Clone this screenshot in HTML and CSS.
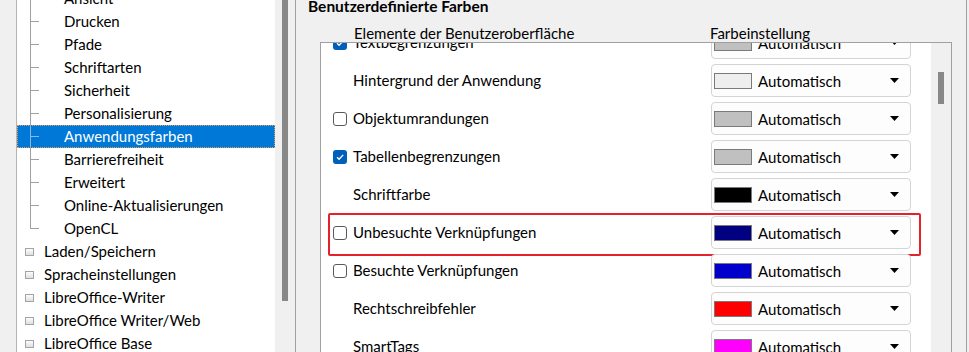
FILE: index.html
```html
<!DOCTYPE html>
<html lang="de">
<head>
<meta charset="utf-8">
<title>Anwendungsfarben</title>
<link rel="stylesheet" href="styles.css">
</head>
<body>
<div class="window">
  <div class="left">
    <div class="tree">
      <div class="tree-view">
        <ul class="tree-list">
          <li class="node child"><span class="branch"></span><span class="label">Ansicht</span></li>
          <li class="node child"><span class="branch"></span><span class="label">Drucken</span></li>
          <li class="node child"><span class="branch"></span><span class="label">Pfade</span></li>
          <li class="node child"><span class="branch"></span><span class="label">Schriftarten</span></li>
          <li class="node child"><span class="branch"></span><span class="label">Sicherheit</span></li>
          <li class="node child"><span class="branch"></span><span class="label">Personalisierung</span></li>
          <li class="node child selected"><span class="branch"></span><span class="label">Anwendungsfarben</span></li>
          <li class="node child"><span class="branch"></span><span class="label">Barrierefreiheit</span></li>
          <li class="node child"><span class="branch"></span><span class="label">Erweitert</span></li>
          <li class="node child"><span class="branch"></span><span class="label">Online-Aktualisierungen</span></li>
          <li class="node child last"><span class="branch"></span><span class="label">OpenCL</span></li>
          <li class="node top"><span class="expander"></span><span class="label">Laden/Speichern</span></li>
          <li class="node top"><span class="expander"></span><span class="label">Spracheinstellungen</span></li>
          <li class="node top"><span class="expander"></span><span class="label">LibreOffice-Writer</span></li>
          <li class="node top"><span class="expander"></span><span class="label">LibreOffice Writer/Web</span></li>
          <li class="node top"><span class="expander"></span><span class="label">LibreOffice Base</span></li>
        </ul>
      </div>
      <div class="vscroll tree-scroll"><div class="thumb"></div></div>
    </div>
  </div>
  <div class="divider"></div>
  <div class="right">
    <div class="heading">Benutzerdefinierte Farben</div>
    <div class="group">
      <div class="colheads">
        <span class="col-el">Elemente der Benutzeroberfläche</span>
        <span class="col-color">Farbeinstellung</span>
      </div>
      <div class="listbox">
        <div class="rows">
          <div class="rows-inner">
            <div class="row">
              <div class="item"><span class="check on"><svg viewBox="0 0 14 14"><path d="M4 7.2 6.1 9.3 10.2 4.9"/></svg></span><span>Textbegrenzungen</span></div>
              <div class="dropdown"><span class="swatch sw-silver"></span><span class="value">Automatisch</span><svg class="arrow" viewBox="0 0 9 5"><polygon points="0,0 9,0 4.5,5"/></svg></div>
            </div>
            <div class="row">
              <div class="item"><span class="check none"></span><span>Hintergrund der Anwendung</span></div>
              <div class="dropdown"><span class="swatch sw-light"></span><span class="value">Automatisch</span><svg class="arrow" viewBox="0 0 9 5"><polygon points="0,0 9,0 4.5,5"/></svg></div>
            </div>
            <div class="row">
              <div class="item"><span class="check off"></span><span>Objektumrandungen</span></div>
              <div class="dropdown"><span class="swatch sw-silver"></span><span class="value">Automatisch</span><svg class="arrow" viewBox="0 0 9 5"><polygon points="0,0 9,0 4.5,5"/></svg></div>
            </div>
            <div class="row">
              <div class="item"><span class="check on"><svg viewBox="0 0 14 14"><path d="M4 7.2 6.1 9.3 10.2 4.9"/></svg></span><span>Tabellenbegrenzungen</span></div>
              <div class="dropdown"><span class="swatch sw-silver"></span><span class="value">Automatisch</span><svg class="arrow" viewBox="0 0 9 5"><polygon points="0,0 9,0 4.5,5"/></svg></div>
            </div>
            <div class="row">
              <div class="item"><span class="check none"></span><span>Schriftfarbe</span></div>
              <div class="dropdown"><span class="swatch sw-black"></span><span class="value">Automatisch</span><svg class="arrow" viewBox="0 0 9 5"><polygon points="0,0 9,0 4.5,5"/></svg></div>
            </div>
            <div class="row">
              <div class="item"><span class="check off"></span><span>Unbesuchte Verknüpfungen</span></div>
              <div class="dropdown"><span class="swatch sw-navy"></span><span class="value">Automatisch</span><svg class="arrow" viewBox="0 0 9 5"><polygon points="0,0 9,0 4.5,5"/></svg></div>
              <div class="highlight"></div>
            </div>
            <div class="row">
              <div class="item"><span class="check off"></span><span>Besuchte Verknüpfungen</span></div>
              <div class="dropdown"><span class="swatch sw-blue"></span><span class="value">Automatisch</span><svg class="arrow" viewBox="0 0 9 5"><polygon points="0,0 9,0 4.5,5"/></svg></div>
            </div>
            <div class="row">
              <div class="item"><span class="check none"></span><span>Rechtschreibfehler</span></div>
              <div class="dropdown"><span class="swatch sw-red"></span><span class="value">Automatisch</span><svg class="arrow" viewBox="0 0 9 5"><polygon points="0,0 9,0 4.5,5"/></svg></div>
            </div>
            <div class="row">
              <div class="item"><span class="check none"></span><span>SmartTags</span></div>
              <div class="dropdown"><span class="swatch sw-magenta"></span><span class="value">Automatisch</span><svg class="arrow" viewBox="0 0 9 5"><polygon points="0,0 9,0 4.5,5"/></svg></div>
            </div>
          </div>
        </div>
        <div class="vscroll list-scroll"><div class="thumb"></div></div>
      </div>
    </div>
  </div>
</div>
</body>
</html>
```
FILE: styles.css
```css
* { box-sizing: border-box; }
html, body { margin: 0; padding: 0; }
body {
  width: 969px;
  height: 352px;
  overflow: hidden;
  background: #f0f0f0;
  font-family: Lato, "Noto Sans", sans-serif;
  font-size: 15px;
  color: #000;
}
.window { display: flex; height: 352px; overflow: hidden; }

/* ---------- left tree ---------- */
.left { flex: none; width: 295px; padding-left: 16px; }
.tree { display: flex; height: 100%; }
.tree-view {
  width: 259px;
  background: #fff;
  border-left: 1px solid #b4b4b4;
  overflow: hidden;
}
.tree-list { list-style: none; margin: -13px 0 0; padding: 0; }
.node {
  display: flex;
  align-items: center;
  height: 23px;
  line-height: 23px;
  white-space: nowrap;
}
.branch {
  flex: none;
  align-self: stretch;
  width: 9px;
  margin-left: 13px;
  margin-right: 25px;
  background:
    linear-gradient(#a0a0a0, #a0a0a0) 0 0 / 1px 100% no-repeat,
    linear-gradient(#a0a0a0, #a0a0a0) 0 11px / 9px 1px no-repeat;
}
.last .branch {
  background:
    linear-gradient(#a0a0a0, #a0a0a0) 0 0 / 1px 12px no-repeat,
    linear-gradient(#a0a0a0, #a0a0a0) 0 11px / 9px 1px no-repeat;
}
.selected {
  background: #0078d7;
  color: #fff;
  outline: 1px dotted #e8a050;
  outline-offset: -1px;
}
.selected .branch {
  background:
    linear-gradient(#8fb8e0, #8fb8e0) 0 0 / 1px 100% no-repeat,
    linear-gradient(#8fb8e0, #8fb8e0) 0 11px / 9px 1px no-repeat;
}
.expander {
  flex: none;
  width: 9px;
  height: 8px;
  margin-left: 8px;
  margin-right: 10px;
  border: 1px solid #a4a4a4;
  background: linear-gradient(#fdfdfd, #dedede);
}
.vscroll { flex: none; width: 20px; background: #f0f0f0; padding-left: 7px; }
.thumb { width: 6px; background: #888; }
.tree-scroll .thumb { height: 301px; }

.divider { flex: none; width: 1px; background: #a0a0a0; }

/* ---------- right pane ---------- */
.right {
  flex: 1;
  padding: 0 14px 0 12px;
  border-right: 1px solid #a0a0a0;
  margin-right: 2px;
}
.heading {
  font-weight: 700;
  font-size: 15.5px;
  line-height: 16px;
  margin-top: -2px;
}
.group { padding-left: 12px; }
.colheads {
  display: flex;
  margin-top: 10px;
  line-height: 18px;
  padding-left: 34px;
  white-space: nowrap;
}
.col-el { flex: none; width: 356px; }

.listbox {
  display: flex;
  height: 400px;
  background: #fff;
  border: 1px solid #a0a0a0;
}
.rows { flex: 1; overflow: hidden; }
.rows-inner { display: flex; flex-direction: column; gap: 5px; margin-top: -17px; }
.row { position: relative; display: flex; align-items: center; height: 33px; }
.item {
  flex: 1;
  display: flex;
  align-items: center;
  gap: 6px;
  padding-left: 12px;
  line-height: 33px;
  white-space: nowrap;
}
.check { flex: none; width: 14px; height: 14px; border-radius: 3px; }
.check.none { visibility: hidden; }
.check.off { border: 1px solid #5a5a5a; background: #fff; }
.check.on { background: #005fb8; }
.check svg { display: block; width: 14px; height: 14px; }
.check path { fill: none; stroke: #fff; stroke-width: 1.3; }

.dropdown {
  flex: none;
  display: flex;
  align-items: center;
  width: 200px;
  height: 33px;
  margin-right: 20px;
  padding: 0 11px 0 2px;
  background: #fdfdfd;
  border: 1px solid #d4d4d4;
  border-radius: 4px;
}
.swatch {
  flex: none;
  width: 38px;
  height: 16px;
  margin-right: 6px;
  border: 1px solid #7a7a7a;
}
.sw-silver { background: #c0c0c0; }
.sw-light { background: #eeeeee; }
.sw-black { background: #000000; }
.sw-navy { background: #000080; }
.sw-blue { background: #0000cc; }
.sw-red { background: #ff0000; }
.sw-magenta { background: #ff00ff; }
.value { flex: 1; }
.arrow { flex: none; width: 9px; height: 5px; fill: #000; }

.list-scroll { padding-top: 29px; }
.list-scroll .thumb { height: 32px; }

.highlight {
  position: absolute;
  left: 7px;
  top: -3px;
  width: 593px;
  height: 43px;
  border: 2px solid #e5212b;
  border-radius: 2px;
  pointer-events: none;
}
```
